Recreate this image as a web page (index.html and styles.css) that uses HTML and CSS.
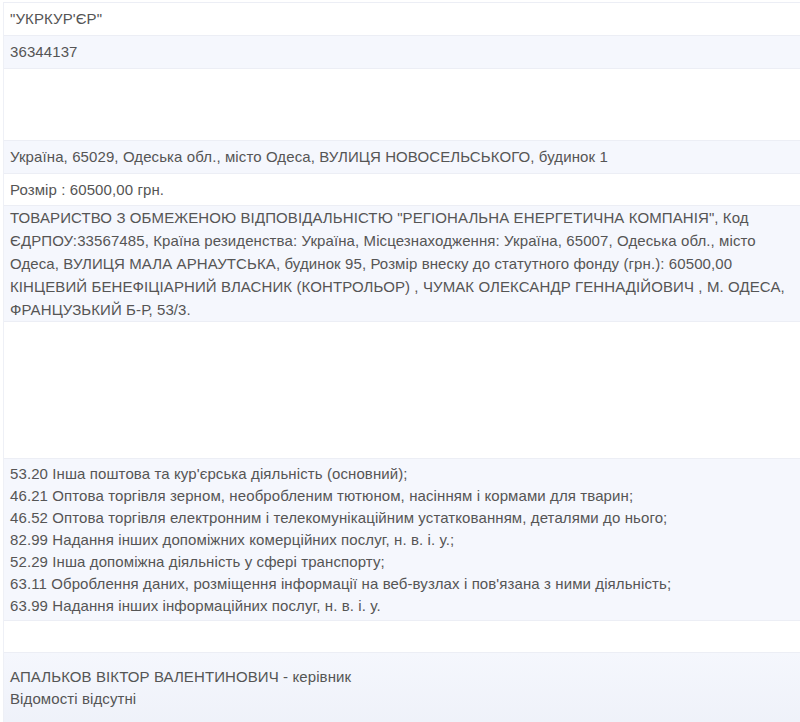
FILE: index.html
```html
<!DOCTYPE html>
<html lang="uk">
<head>
<meta charset="utf-8">
<link rel="stylesheet" href="styles.css">
</head>
<body>
<div class="table">
  <div class="row white h33"><div class="cell">"УКРКУР'ЄР"</div></div>
  <div class="row blue h33"><div class="cell">36344137</div></div>
  <div class="row white h72"><div class="cell"></div></div>
  <div class="row blue h33"><div class="cell">Україна, 65029, Одеська обл., місто Одеса, ВУЛИЦЯ НОВОСЕЛЬСЬКОГО, будинок 1</div></div>
  <div class="row white h32"><div class="cell">Розмір : 60500,00 грн.</div></div>
  <div class="row blue h116"><div class="cell wide">ТОВАРИСТВО З ОБМЕЖЕНОЮ ВІДПОВІДАЛЬНІСТЮ "РЕГІОНАЛЬНА ЕНЕРГЕТИЧНА КОМПАНІЯ", Код ЄДРПОУ:33567485, Країна резиденства: Україна, Місцезнаходження: Україна, 65007, Одеська обл., місто Одеса, ВУЛИЦЯ МАЛА АРНАУТСЬКА, будинок 95, Розмір внеску до статутного фонду (грн.): 60500,00 КІНЦЕВИЙ БЕНЕФІЦІАРНИЙ ВЛАСНИК (КОНТРОЛЬОР) , ЧУМАК ОЛЕКСАНДР ГЕННАДІЙОВИЧ , М. ОДЕСА, ФРАНЦУЗЬКИЙ Б-Р, 53/3.</div></div>
  <div class="row white h137"><div class="cell"></div></div>
  <div class="row blue h162"><div class="cell">53.20 Інша поштова та кур'єрська діяльність (основний);<br>46.21 Оптова торгівля зерном, необробленим тютюном, насінням і кормами для тварин;<br>46.52 Оптова торгівля електронним і телекомунікаційним устаткованням, деталями до нього;<br>82.99 Надання інших допоміжних комерційних послуг, н. в. і. у.;<br>52.29 Інша допоміжна діяльність у сфері транспорту;<br>63.11 Оброблення даних, розміщення інформації на веб-вузлах і пов'язана з ними діяльність;<br>63.99 Надання інших інформаційних послуг, н. в. і. у.</div></div>
  <div class="row white h32"><div class="cell"></div></div>
  <div class="row blue last"><div class="cell top">АПАЛЬКОВ ВІКТОР ВАЛЕНТИНОВИЧ - керівник<br>Відомості відсутні</div></div>
</div>
</body>
</html>
```

FILE: styles.css
```css
html, body {
  margin: 0;
  padding: 0;
  background: #ffffff;
  height: 100%;
  overflow: hidden;
}
body {
  font-family: "Liberation Sans", Arial, sans-serif;
  font-size: 15px;
  letter-spacing: 0.1px;
  color: #555555;
  padding-top: 2px;
  box-sizing: border-box;
}
.table {
  margin-left: 3px;
  border-left: 1px solid #eef0f6;
  border-top: 1px solid #eceef5;
}
.row {
  display: flex;
  align-items: center;
  border-bottom: 1px solid #eceef5;
  box-sizing: border-box;
}
.white { background: #ffffff; }
.blue { background: #f5f7fd; }
.cell {
  padding: 0 6px 0 6px;
  line-height: 22px;
}
.cell.wide { line-height: 23px; }
.h32 { height: 32px; }
.h33 { height: 33px; }
.h72 { height: 72px; }
.h116 { height: 116px; }
.h137 { height: 137px; }
.h162 { height: 162px; }
.last {
  height: 80px;
  align-items: flex-start;
  background: linear-gradient(#f5f7fd, #eef1f9);
}
.cell.top { padding-top: 13px; }
```
